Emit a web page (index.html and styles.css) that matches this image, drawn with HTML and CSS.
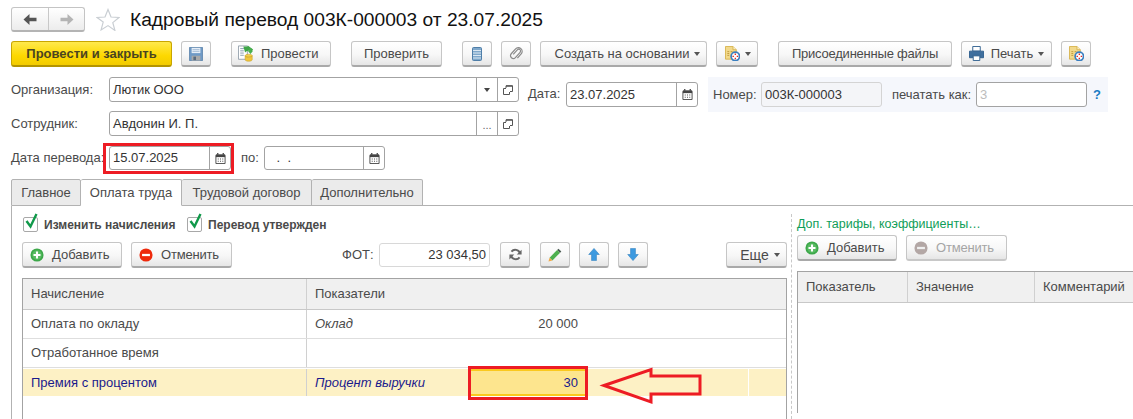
FILE: index.html
```html
<!DOCTYPE html>
<html lang="ru">
<head>
<meta charset="utf-8">
<title>Кадровый перевод</title>
<link rel="stylesheet" href="styles.css">
</head>
<body>
<svg class="defs" width="0" height="0" aria-hidden="true">
  <defs>
    <symbol id="cal" viewBox="0 0 12 12"><path d="M1 2.500h10v9H1z" fill="#fff" stroke="#444"/><path d="M1 1.500h10v3H1z" fill="#444"/><path d="M3 0v2M9 0v2" stroke="#444" stroke-width="1.400"/><path d="M3 6h1v1H3zM5.500 6h1v1h-1zM8 6h1v1H8zM3 8.500h1v1H3zM5.500 8.500h1v1h-1zM8 8.500h1v1H8z" fill="#444"/></symbol>
    <symbol id="open" viewBox="0 0 10 10"><path d="M3 3V.8h6.500v5.700H7" fill="none" stroke="#555"/><path d="M3 1h6.500" stroke="#555" stroke-width="1.400"/><path d="M3 3.500H.5v6h6V7" fill="none" stroke="#555"/></symbol>
    <symbol id="plus" viewBox="0 0 16 16"><circle cx="8" cy="8" r="7.500" fill="#3da84a"/><circle cx="8" cy="8" r="5.500" fill="#58bb62"/><path d="M8 4v8M4 8h8" stroke="#fff" stroke-width="2.400"/></symbol>
    <symbol id="minus" viewBox="0 0 16 16"><circle cx="8" cy="8" r="7.500" fill="#ee2a0c"/><path d="M3.500 8h9" stroke="#fff" stroke-width="2.600"/></symbol>
    <symbol id="minus-off" viewBox="0 0 16 16"><circle cx="8" cy="8" r="7.500" fill="#b3a7a5"/><path d="M3.500 8h9" stroke="#efefef" stroke-width="2.600"/></symbol>
    <symbol id="docclock" viewBox="0 0 16 16"><path d="M.5.500h8l3.500 3.500v10H.500z" fill="#f2d98b" stroke="#d8b450"/><path d="M8.500.500v3.500h3.500" fill="#fbf0c8" stroke="#d8b450"/><path d="M2.500 6h2M2.500 8h2M2.500 10h2M6 6h2" stroke="#c09a3c"/><circle cx="11" cy="11" r="4.500" fill="#fff" stroke="#3a7fc0" stroke-width="1.800"/><path d="M11 8v1.500M11 12.500V14M8 11h1.500M12.500 11H14" stroke="#e0251f" stroke-width="1.400"/></symbol>
  </defs>
</svg>

<header class="head">
  <div class="nav">
    <span class="nav-cell nav-cell-first">
      <svg class="nav-ico" viewBox="0 0 13 11"><path d="M6 0v3.800h7v3.400H6V11L0 5.500z" fill="#555"/></svg>
    </span>
    <span class="nav-cell">
      <svg class="nav-ico" viewBox="0 0 13 11"><path d="M7 0v3.800H0v3.400h7V11l6-5.500z" fill="#b4b4b4"/></svg>
    </span>
  </div>
  <svg class="star" viewBox="0 0 24 23"><path d="M12 1.500l3 7.500 8 .5-6.200 5.100 2.100 7.800L12 17.600l-6.900 4.300 2.100-7.800L1 9.500l8-.5z" fill="#fff" stroke="#c9ced3" stroke-width="1.200"/></svg>
  <h1 class="title">Кадровый перевод 003К-000003 от 23.07.2025</h1>
</header>

<div class="toolbar">
  <div class="tgroup">
    <button class="btn btn-primary w-close">Провести и закрыть</button>
    <button class="btn w-icon">
      <svg class="ico-save" viewBox="0 0 16 16"><path d="M.5.500h15v15H.500z" fill="#6f9ac6" stroke="#5f86ad"/><path d="M3 1h10v6H3z" fill="#e6eef7"/><path d="M4 3h8M4 5h8" stroke="#9fb8d2"/><path d="M3 10h10v5.500H3z" fill="#a9a9a9"/><path d="M5 11h3v4H5z" fill="#5a6b7d"/></svg>
    </button>
  </div>
  <div class="tgroup">
    <button class="btn w-post">
      <svg class="ico-post" viewBox="0 0 18 18"><path d="M.5.500h10v15H.500z" fill="#fff" stroke="#8d9aa6"/><path d="M2.500 3.500h6M2.500 6h4M2.500 8.500h4M2.500 11h4" stroke="#7c93ac"/><path d="M6 1h5V0l6 4.500-3 3.800V5.800c-3 0-4.500 0-6 2z" fill="#3fa648"/><path d="M11 6l3 3.500 3-3.500h-1.800V3h-2.400v3z" fill="#49b04f"/><ellipse cx="12" cy="11.500" rx="4" ry="1.700" fill="#f2cf4a" stroke="#c59f2a" stroke-width=".6"/><path d="M8 11.500v4.500c0 1 1.800 1.700 4 1.700s4-.7 4-1.700v-4.500c0 1-1.800 1.700-4 1.700s-4-.7-4-1.700z" fill="#f0c63d" stroke="#c59f2a" stroke-width=".6"/></svg>
      Провести
    </button>
  </div>
  <div class="tgroup">
    <button class="btn w-check">Проверить</button>
  </div>
  <div class="tgroup">
    <button class="btn w-icon">
      <svg class="ico-list" viewBox="0 0 10 14"><rect x=".5" y=".5" width="9" height="13" rx="1" fill="#7fa8cb" stroke="#4f7ea8"/><path d="M1 3.500h8M1 6h8M1 8.500h8M1 11h8" stroke="#dce8f2"/></svg>
    </button>
    <button class="btn w-icon">
      <svg class="ico-clip" viewBox="0 0 16 16"><path d="M6 11V4.500a2 2 0 0 1 4 0V12a3 3 0 0 1-6 0V5a4 4 0 0 1 8 0v6" fill="none" stroke="#8a8a8a" stroke-width="1.300" transform="rotate(42 8 8)"/></svg>
    </button>
    <button class="btn w-create">Создать на основании<span class="caret"></span></button>
    <button class="btn w-clock">
      <svg class="ico-doc" viewBox="0 0 16 16"><use href="#docclock"/></svg><span class="caret"></span>
    </button>
  </div>
  <div class="tgroup">
    <button class="btn w-files">Присоединенные файлы</button>
    <button class="btn w-print">
      <svg class="ico-print" viewBox="0 0 16 16"><path d="M4 .500h8v5H4z" fill="#fff" stroke="#2f5f8e"/><path d="M.5 5.500h15v7H12V10H4v2.500H.500z" fill="#3f6f9e" stroke="#2f5f8e"/><path d="M4.500 10.500h7v5h-7z" fill="#fff" stroke="#2f5f8e"/></svg>
      Печать<span class="caret"></span>
    </button>
    <button class="btn w-icon">
      <svg class="ico-doc" viewBox="0 0 16 16"><use href="#docclock"/></svg>
    </button>
  </div>
</div>

<section class="form">
  <div class="form-left">
    <div class="row row-org">
      <label class="lbl">Организация:</label>
      <div class="field f-wide">
        <span class="val">Лютик ООО</span>
        <span class="cell"><span class="caret caret-dark"></span></span>
        <span class="cell"><svg class="ico-open"><use href="#open"/></svg></span>
      </div>
    </div>
    <div class="row row-emp">
      <label class="lbl">Сотрудник:</label>
      <div class="field f-wide">
        <span class="val">Авдонин И. П.</span>
        <span class="cell dots">...</span>
        <span class="cell"><svg class="ico-open"><use href="#open"/></svg></span>
      </div>
    </div>
    <div class="row row-date">
      <label class="lbl">Дата перевода:</label>
      <div class="field f-date-a">
        <span class="val">15.07.2025</span>
        <span class="cell"><svg class="ico-cal"><use href="#cal"/></svg></span>
        <span class="mark mark-date"></span>
      </div>
      <label class="lbl lbl-to">по:</label>
      <div class="field f-date-b">
        <span class="val val-empty">&nbsp;.&nbsp;&nbsp;.</span>
        <span class="cell"><svg class="ico-cal"><use href="#cal"/></svg></span>
      </div>
    </div>
  </div>
  <div class="form-right">
    <label class="lbl lbl-docdate">Дата:</label>
    <div class="field f-docdate">
      <span class="val">23.07.2025</span>
      <span class="cell"><svg class="ico-cal"><use href="#cal"/></svg></span>
    </div>
    <div class="numpanel">
      <label class="lbl lbl-num">Номер:</label>
      <div class="field f-num"><span class="val">003К-000003</span></div>
      <label class="lbl lbl-as">печатать как:</label>
      <div class="field f-as"><span class="val val-ph">3</span></div>
      <span class="help">?</span>
    </div>
  </div>
</section>

<nav class="tabs">
  <span class="tab t1">Главное</span>
  <span class="tab tab-active t2">Оплата труда</span>
  <span class="tab t3">Трудовой договор</span>
  <span class="tab t4">Дополнительно</span>
  <span class="tabs-rest"></span>
</nav>

<main class="panel">
  <section class="pane-left">
    <div class="checks">
      <span class="chk"><svg class="tick" viewBox="0 0 14 17"><path d="M2.500 8l4 5.500L12.500 1" fill="none" stroke="#10994a" stroke-width="2.400"/></svg></span>
      <span class="chk-label cl1">Изменить начисления</span>
      <span class="chk"><svg class="tick" viewBox="0 0 14 17"><path d="M2.500 8l4 5.500L12.500 1" fill="none" stroke="#10994a" stroke-width="2.400"/></svg></span>
      <span class="chk-label">Перевод утвержден</span>
    </div>
    <div class="cmdbar">
      <button class="btn w-add"><svg class="ico-act"><use href="#plus"/></svg>Добавить</button>
      <button class="btn w-cancel"><svg class="ico-act"><use href="#minus"/></svg>Отменить</button>
      <label class="lbl lbl-fot">ФОТ:</label>
      <div class="field f-fot"><span class="val val-right">23 034,50</span></div>
      <button class="btn w-icon w-refresh">
        <svg class="ico-refresh" viewBox="0 0 16 16"><path d="M13.500 6.500A6 6 0 0 0 3 4.500M2.500 9.500A6 6 0 0 0 13 11.500" fill="none" stroke="#666" stroke-width="2.400"/><path d="M15.500 2v6h-6zM.5 14V8h6z" fill="#666"/></svg>
      </button>
      <button class="btn w-icon">
        <svg class="ico-pen" viewBox="0 0 16 16"><path d="M12 .800l3.200 3.200-1.600 1.600-3.200-3.200z" fill="#4a5a52"/><path d="M10.400 2.400l3.200 3.200L5 14.200 1.800 11z" fill="#4db04f"/><path d="M1.800 11L5 14.200.5 15.500z" fill="#f0a848"/></svg>
      </button>
      <button class="btn w-icon">
        <svg class="ico-arrow" viewBox="0 0 14 16"><path d="M7 .500L13.500 8H10v7.500H4V8H.500z" fill="#3d9ae0" stroke="#2f7fbd" stroke-width=".7"/></svg>
      </button>
      <button class="btn w-icon">
        <svg class="ico-arrow" viewBox="0 0 14 16"><path d="M7 15.500L13.500 8H10V.500H4V8H.500z" fill="#3d9ae0" stroke="#2f7fbd" stroke-width=".7"/></svg>
      </button>
      <button class="btn w-more">Еще<span class="caret"></span></button>
    </div>
    <div class="grid">
      <div class="grid-head">
        <span class="gh gc1">Начисление</span>
        <span class="gh gc2">Показатели</span>
      </div>
      <div class="grid-row">
        <span class="gd gc1">Оплата по окладу</span>
        <span class="gd gc2 it">Оклад</span>
        <span class="gd gc3">20 000</span>
      </div>
      <div class="grid-row">
        <span class="gd gc1">Отработанное время</span>
        <span class="gd gc2"></span>
        <span class="gd gc3"></span>
      </div>
      <div class="grid-row grid-row-sel">
        <span class="gd gc1">Премия с процентом</span>
        <span class="gd gc2 it">Процент выручки</span>
        <span class="gd gc3 gc3-cur">30<span class="mark mark-cell"></span></span>
        <span class="gd gc4"></span>
      </div>
      <svg class="arrow-note" viewBox="0 0 108 44"><path d="M4 20.500L51 4.500V11h49v18H51v8z" fill="none" stroke="#ed1c24" stroke-width="3"/></svg>
    </div>
  </section>
  <section class="pane-right">
    <div class="pr-title">Доп. тарифы, коэффициенты…</div>
    <div class="pr-bar">
      <button class="btn w-add"><svg class="ico-act"><use href="#plus"/></svg>Добавить</button>
      <button class="btn w-cancel btn-off"><svg class="ico-act"><use href="#minus-off"/></svg>Отменить</button>
    </div>
    <div class="grid grid-right">
      <div class="grid-head">
        <span class="gh pc1">Показатель</span>
        <span class="gh pc2">Значение</span>
        <span class="gh pc3">Комментарий</span>
      </div>
    </div>
  </section>
</main>
</body>
</html>
```

FILE: styles.css
```css
* { box-sizing: border-box; }
html, body { margin: 0; padding: 0; }
body {
  width: 1133px;
  height: 419px;
  overflow: hidden;
  background: #fff;
  font: 13px/16px "Liberation Sans", Arial, sans-serif;
  color: #4a4a4a;
}
.defs { position: absolute; }

/* header */
.head { display: flex; align-items: center; height: 25px; margin: 7px 0 0 11px; }
.nav {
  display: flex; width: 74px; height: 25px;
  border: 1px solid #c4c4c4; border-bottom: 2px solid #b4b4b4; border-radius: 3px;
  background: linear-gradient(#fff, #ececec);
}
.nav-cell { flex: 1; display: flex; align-items: center; justify-content: center; }
.nav-cell-first { border-right: 1px solid #c8c8c8; flex: 0 0 37px; }
.nav-ico { width: 14px; height: 11px; }
.star { width: 24px; height: 23px; margin-left: 11px; }
.title { margin: 0 0 0 10px; font-weight: 400; font-size: 19.2px; line-height: 25px; color: #111; }

/* toolbar */
.toolbar { display: flex; gap: 20px; margin: 9px 0 0 11px; height: 26px; }
.tgroup { display: flex; gap: 9px; }
.btn {
  display: inline-flex; align-items: center; justify-content: center;
  height: 26px; padding: 0; margin: 0;
  font: inherit; color: #4a4a4a;
  border: 1px solid #c6c6c6; border-bottom: 2px solid #a9a9a9; border-radius: 3px;
  background: linear-gradient(#fff 0%, #f7f7f7 55%, #e6e6e6 100%);
}
.btn-primary {
  font-weight: 700; color: #4a4420;
  border-color: #c9a600; border-bottom-color: #b39400;
  background: linear-gradient(#ffe94d 0%, #fdd800 60%, #f2cb00 100%);
}
.btn-off { color: #a5a5a5; border-bottom-color: #c8c8c8; }
.w-close { width: 161px; }
.w-icon { width: 30px; }
.w-post { width: 100px; justify-content: flex-start; padding-left: 6px; }
.w-check { width: 91px; }
.w-create { width: 167px; padding-left: 8px; }
.w-clock { width: 42px; justify-content: flex-start; padding-left: 8px; }
.w-files { width: 174px; letter-spacing: -.22px; }
.w-print { width: 91px; }
.w-add { width: 100px; justify-content: flex-start; padding-left: 7px; }
.w-cancel { width: 101px; margin-left: 9px; justify-content: flex-start; padding-left: 7px; letter-spacing: -.2px; }
.w-more { width: 61px; margin-left: 78px; padding-left: 7px; font-size: 14px; }
.w-refresh { margin-left: 10px; }
.cmdbar .w-icon + .w-icon { margin-left: 10px; }
.cmdbar .w-icon:nth-of-type(5), .cmdbar .w-icon:nth-of-type(6) { margin-left: 9px; }

.caret {
  display: inline-block; width: 0; height: 0; margin-left: 5px; margin-top: 1px;
  border: 3px solid transparent; border-top: 4px solid #555; border-bottom: 0;
}
.caret-dark { margin: 0; border-top-color: #444; }
.ico-save { width: 14px; height: 14px; }
.ico-clip { width: 15px; height: 15px; }
.ico-doc { width: 15px; height: 15px; }
.ico-act { width: 14px; height: 14px; margin-right: 8px; flex: none; }
.ico-post { width: 16px; height: 17px; margin-right: 7px; flex: none; }
.ico-list { width: 10px; height: 14px; }
.ico-print { width: 15px; height: 15px; margin-right: 7px; }
.ico-refresh { width: 13px; height: 13px; }
.ico-pen { width: 14px; height: 14px; }
.ico-arrow { width: 12px; height: 13px; }
.ico-open { width: 10px; height: 10px; }
.ico-cal { width: 11px; height: 11px; }

/* form */
.form { display: flex; margin: 10px 0 0 11px; }
.form-left { width: 508px; }
.row { display: flex; align-items: center; }
.row-org { height: 25px; }
.row-emp { height: 25px; margin-top: 9px; }
.row-date { height: 24px; margin-top: 10px; }
.lbl { white-space: nowrap; color: #4a4a4a; }
.row .lbl:first-child { width: 98px; flex: none; }
.lbl-to { margin-left: 10px; width: 23px; }
.field {
  position: relative; display: flex; align-items: stretch;
  height: 100%; border: 1px solid #a3a3a3; border-radius: 3px; background: #fff;
}
.f-wide { width: 410px; }
.f-date-a { width: 122px; }
.f-date-b { width: 121px; }
.val { flex: 1; padding: 0 3px; line-height: 23px; color: #333; white-space: nowrap; overflow: hidden; }
.row-date .val { line-height: 22px; }
.val-empty { padding-left: 8px; }
.val-right { text-align: right; }
.val-ph { color: #bcbcbc; }
.cell {
  flex: none; width: 21px; display: flex; align-items: center; justify-content: center;
  border-left: 1px solid #a3a3a3;
}
.dots { color: #666; font-size: 11px; padding-top: 3px; }

.form-right { display: flex; align-items: flex-start; margin-left: 9px; }
.lbl-docdate { width: 38px; margin-top: 9px; }
.f-docdate { width: 132px; height: 25px; margin-top: 5px; }
.numpanel {
  display: flex; align-items: center; width: 400px; height: 35px; margin-left: 10px;
  padding-left: 5px; background: #f5f7fc;
}
.lbl-num { width: 48px; }
.f-num { width: 121px; height: 25px; background: #f4f5f8; border-color: #d4d4d4; }
.lbl-as { width: 84px; margin-left: 10px; }
.f-as { width: 111px; height: 25px; }
.help { margin-left: 6px; color: #1a7cc4; font-weight: 700; font-size: 13px; }

/* red annotations */
.mark { position: absolute; border: 3px solid #ed1c24; pointer-events: none; }
.mark-date { left: -7px; right: -4px; top: -4px; bottom: -5px; }
.mark-cell { left: -3px; right: -3px; top: -5px; bottom: -6px; }
.arrow-note { position: absolute; left: 577px; top: 86px; width: 108px; height: 44px; overflow: visible; }

/* tabs */
.tabs { display: flex; height: 27px; margin-top: 9px; padding-left: 11px; }
.tab {
  display: flex; align-items: center; justify-content: center; height: 27px;
  background: #ebebeb; border: 1px solid #b2b2b2; border-left-width: 0; border-radius: 2px 2px 0 0;
  color: #4a4a4a;
}
.t1 { width: 70px; border-left-width: 1px; }
.t2 { width: 101px; }
.t3 { width: 130px; }
.t4 { width: 111px; }
.tab-active { background: #fff; border-bottom-color: #fff; }
.tabs-rest { flex: 1; border-bottom: 1px solid #b2b2b2; }

/* panel */
.panel { display: flex; height: 213px; margin-left: 11px; border-left: 1px solid #b2b2b2; }
.pane-left { width: 779px; padding-left: 10px; flex: none; }
.checks { display: flex; align-items: center; height: 15px; margin-top: 11px; }
.chk { position: relative; width: 15px; height: 15px; margin-left: 1px; border: 1px solid #a8a8a8; border-radius: 2px; background: #fff; flex: none; }
.tick { position: absolute; left: 0; top: -5px; width: 14px; height: 17px; }
.chk-label { margin-left: 6px; font-weight: 700; font-size: 12px; color: #4a4a4a; white-space: nowrap; }
.cl1 { width: 142px; flex: none; }
.cmdbar { display: flex; align-items: center; height: 26px; margin-top: 10px; }
.lbl-fot { margin-left: 110px; width: 37px; }
.f-fot { width: 111px; height: 24px; border-color: #d8d8d8; }
.f-fot .val { padding-right: 3px; line-height: 22px; }

.grid { position: relative; margin-top: 10px; border: 1px solid #a3a3a3; border-bottom: 0; width: 765px; height: 142px; }
.grid-head { display: flex; height: 31px; background: #f0f0f0; border-bottom: 1px solid #c8c8c8; }
.gh { display: flex; align-items: center; padding-left: 8px; color: #4a4a4a; border-right: 1px solid #d0d0d0; }
.gc1 { width: 284px; flex: none; }
.gc2 { flex: none; }
.grid-head .gc2 { flex: 1; border-right: 0; }
.grid-row { display: flex; height: 29px; border-bottom: 1px solid #dedede; }
.gd { display: flex; align-items: center; padding-left: 8px; color: #4a4a4a; }
.grid-row .gc1 { border-right: 1px solid #d0d0d0; }
.grid-row .gc2 { width: 164px; }
.grid-row .gc3 { position: relative; width: 114px; justify-content: flex-end; padding: 0 7px 0 0; }
.it { font-style: italic; }
.grid-row-sel { background: #fdf1c5; margin-top: 1px; height: 27px; border-bottom: 0; }
.grid-row-sel .gd { color: #1a1a8c; }
.gc3-cur { background: #fde58e; border-top: 2px solid #fac81e; border-bottom: 2px solid #fac81e; }
.gc4 { width: 164px; border-right: 1px solid #fff; padding: 0; }

.pane-right { flex: 1; margin-top: 8px; padding-left: 5px; border-left: 1px dashed #c8c8c8; }
.pr-title { height: 16px; margin-top: 2px; font-size: 12.5px; color: #0f9d58; white-space: nowrap; }
.pr-bar { display: flex; margin-top: 3px; }
.grid-right { width: 336px; margin-top: 10px; border-right: 0; }
.pc1 { width: 110px; flex: none; }
.pc2 { width: 127px; flex: none; }
.pc3 { flex: 1; border-right: 0; }
```
